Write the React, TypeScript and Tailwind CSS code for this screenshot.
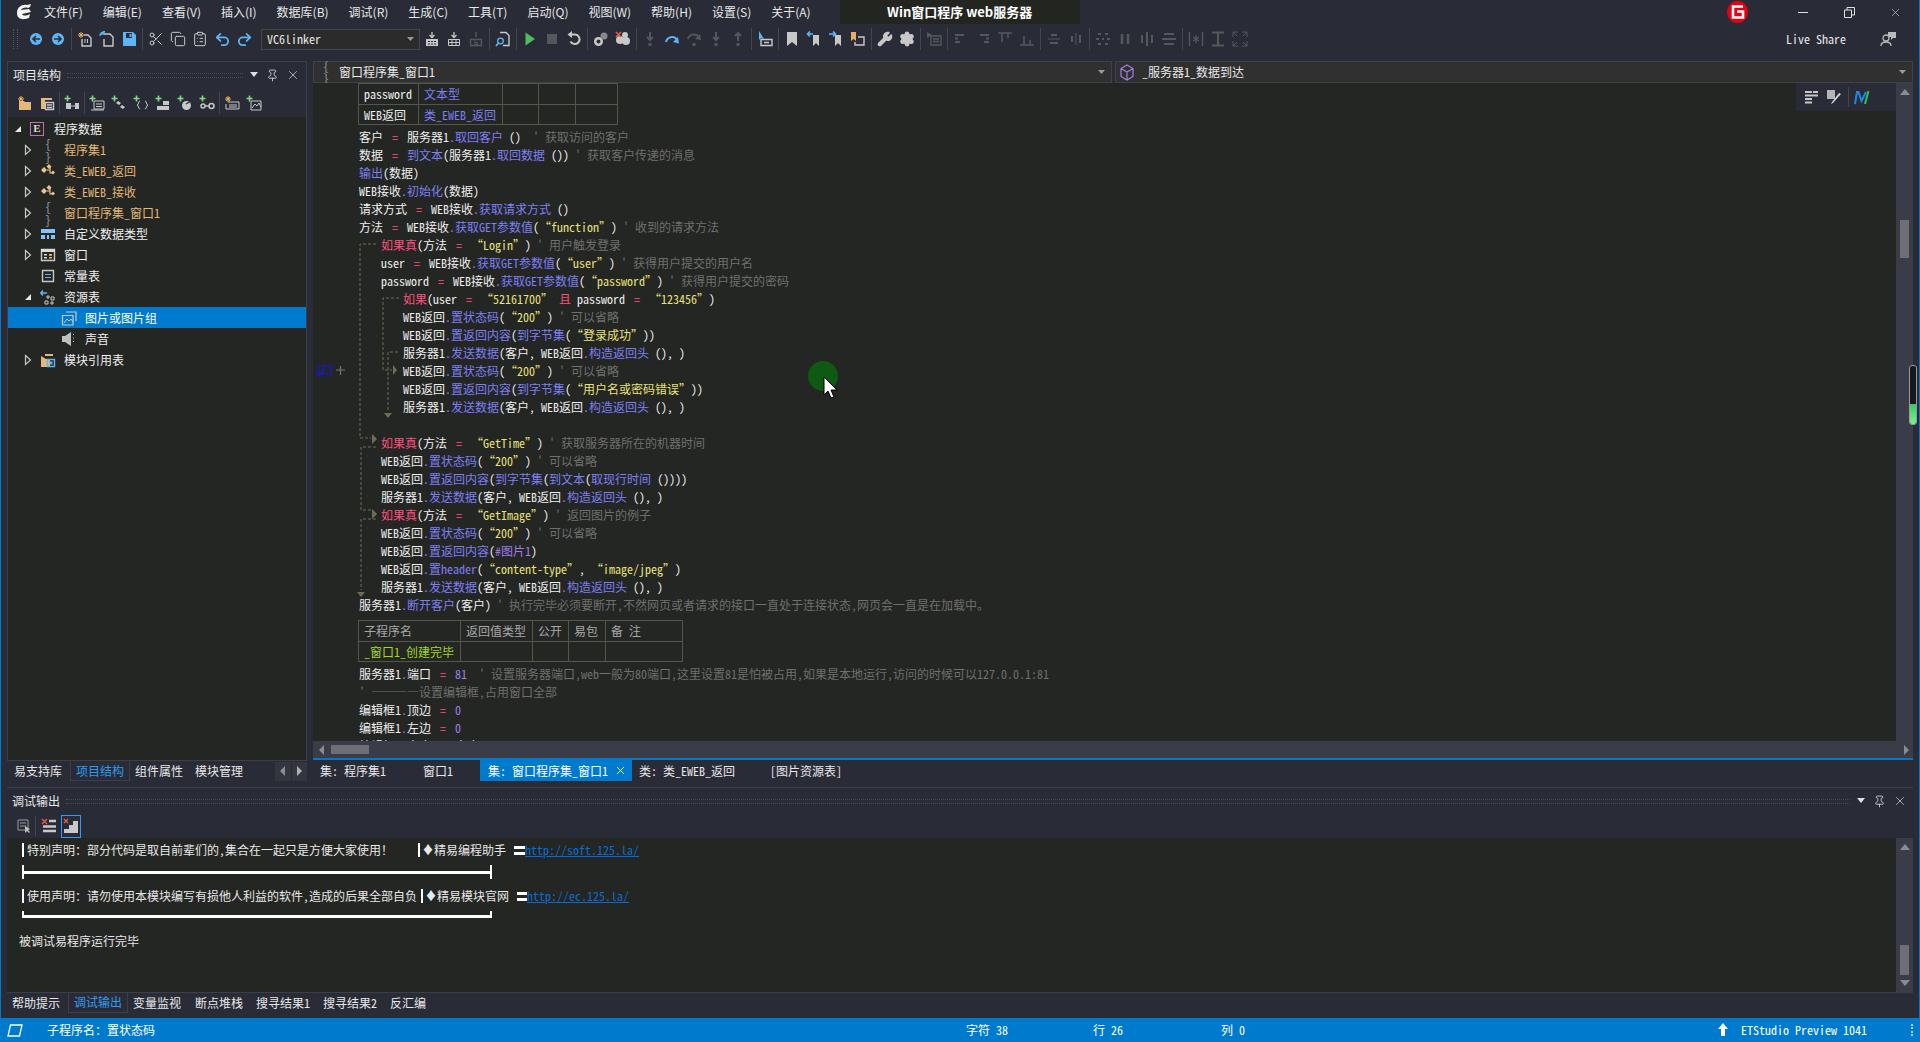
import type { ReactNode } from "react";
import { ClipboardList, Copy, Pin, Redo2, Scissors, Settings, Undo2, Wrench, X } from "lucide-react";

const menus = ["文件(F)", "编辑(E)", "查看(V)", "插入(I)", "数据库(B)", "调试(R)", "生成(C)", "工具(T)", "启动(Q)", "视图(W)", "帮助(H)", "设置(S)", "关于(A)"];

const blue = "#5fb4f5";
const gray = "#c8c8c8";
const dim = "#55575c";

function Svg({ children, size = 16 }: { children: ReactNode; size?: number }) {
  return (
    <svg width={size} height={size} viewBox="0 0 16 16" fill="none">
      {children}
    </svg>
  );
}

function Line({ d, c = gray, w = 1.4 }: { d: string; c?: string; w?: number }) {
  return <path d={d} stroke={c} strokeWidth={w} fill="none" />;
}

function Fill({ d, c = gray }: { d: string; c?: string }) {
  return <path d={d} fill={c} />;
}

const plus = <Line d="M3.5 0.5v6M0.5 3.5h6" c="#86d986" w={1.6} />;
const star = <Line d="M4 1v6M1 4h6M2 2l4 4M6 2l-4 4" c="#f0b45a" w={1} />;

const toolIcons: Record<string, ReactNode> = {
  back: <Svg><circle cx="8" cy="8" r="6" fill={blue} /><Line d="M12 8H6M8 5 5 8l3 3" c="#2a2d38" w={1.6} /></Svg>,
  forward: <Svg><circle cx="8" cy="8" r="6" fill={blue} /><Line d="M4 8h6M8 5l3 3-3 3" c="#2a2d38" w={1.6} /></Svg>,
  newFile: <Svg>{star}<Line d="M7 4h4l3 3v8H5V8" /><Line d="M8 8v4M10.500 8v4" w={1} /></Svg>,
  open: <Svg><Line d="M5 3h6l3 3v9H5V8" /><Line d="M1 5c0-3 2-4 5-4M5 0v3H2" c={blue} /></Svg>,
  save: <Svg><Fill d="M2 1h10l3 3v11H2z" c={blue} /><Fill d="M5 2h6v5H5z" c="#2a2d38" /><Fill d="M8.500 3h2v3h-2z" c={blue} /></Svg>,
  build: <Svg><Line d="M8 1v5M5.500 4 8 6.500 10.500 4" w={1.3} /><Fill d="M2 8h12v7H2z" /><Fill d="M4 10h2v1H4zM7 10h2v1H7zM10 10h2v1h-2zM4 12.500h2v1H4zM7 12.500h2v1H7zM10 12.500h2v1h-2z" c="#2a2d38" /></Svg>,
  buildAll: <Svg><Line d="M8 1v5M5.500 4 8 6.500 10.500 4" w={1.3} /><Line d="M2.500 8.500h11v6h-11zM2.500 11.500h11M6 8.500v6M10 8.500v6" w={1} /></Svg>,
  buildOff: <Svg><Line d="M8 1v5" c={dim} /><Line d="M2.500 8.500h11v6h-11z" c={dim} /><Line d="M7 10v3.500h2.500v-2H7" c={dim} w={1} /></Svg>,
  docFind: <Svg><Line d="M5 1.500h6l3 3v10H8" /><circle cx="5.500" cy="10" r="2.800" stroke={blue} strokeWidth="1.300" /><Line d="M3.500 12 1 15" c={blue} w={1.6} /></Svg>,
  play: <Svg><Fill d="M3.500 1.500 13 8l-9.500 6.500z" c="#4dbd5f" /></Svg>,
  stop: <Svg><Fill d="M3 3h10v10H3z" c={dim} /></Svg>,
  restart: <Svg><Line d="M4 3.500h5a4.800 4.800 0 1 1-4.500 7" w={2} /><Fill d="M6 0v7L1.500 3.500z" /></Svg>,
  breakOn: <Svg><circle cx="5.500" cy="10.500" r="4.500" fill={gray} /><circle cx="5.500" cy="10.500" r="2" fill="#2a2d38" /><circle cx="11" cy="5" r="3.500" fill="#888" /></Svg>,
  breakOff: <Svg><circle cx="5" cy="9" r="4" fill={gray} /><circle cx="11" cy="10" r="4" fill={gray} /><circle cx="10" cy="4" r="3" fill={gray} /><Line d="M1 1l5 5M6 1 1 6" c="#e45a4d" w={1.6} /></Svg>,
  stepDim: <Svg><Line d="M8 1v8M5 6l3 3 3-3" c={dim} w={2} /><circle cx="8" cy="13.500" r="1.800" fill={dim} /></Svg>,
  stepUpDim: <Svg><Line d="M8 10V2M5 5l3-3 3 3" c={dim} w={2} /><circle cx="8" cy="13.500" r="1.800" fill={dim} /></Svg>,
  over: <Svg><Line d="M2 11c1-5 8-7 11-2" c={blue} w={2} /><Fill d="M15 12.500 9 11l5-5z" c={blue} /></Svg>,
  overDim: <Svg><Line d="M2 8c1-5 8-6 11-2" c={dim} w={2} /><Fill d="M15 9 9 8l5-5z" c={dim} /><circle cx="8" cy="13.500" r="1.800" fill={dim} /></Svg>,
  cursor: <Svg><Fill d="M2 0v9l2-2 3 1z" c={blue} /><Line d="M4 8.500h11v6H4zM7 11.500h5" /></Svg>,
  mark: <Svg><Fill d="M3 1h10v14l-5-4-5 4z" /></Svg>,
  markPrev: <Svg><Fill d="M7 4h6v11l-3-3-3 3z" /><Line d="M7 3H2M4 .500 1.500 3 4 5.500" c={blue} w={1.6} /></Svg>,
  markNext: <Svg><Fill d="M7 4h6v11l-3-3-3 3z" /><Line d="M1 3h6M5 .500 7.500 3 5 5.500" c={blue} w={1.6} /></Svg>,
  markClear: <Svg><Fill d="M1 1h5v9L3.500 8 1 10z" c="#e3b061" /><Line d="M8 6h6v8H5v-3" /></Svg>,
  wrench: <Wrench size={16} color={gray} fill={gray} />,
  gear: <Settings size={16} color={gray} fill={gray} strokeWidth={2.5} />,
  listDim: <Svg><Fill d="M1 1l5 3-5 3z" c={dim} /><Line d="M5 5h10v9H5zM7 8h6M7 10.500h6" c={dim} /></Svg>,
  alignL: <Svg><Line d="M2 4h9M2 11h5M2 7.500h3" c={dim} w={2} /></Svg>,
  alignR: <Svg><Line d="M5 4h9M9 11h5M11 7.500h3" c={dim} w={2} /></Svg>,
  alignT: <Svg><Line d="M1 2h14M5 2v9M11 2v5" c={dim} w={1.6} /></Svg>,
  alignB: <Svg><Line d="M1 14h14M5 14V5M11 14V9" c={dim} w={1.6} /></Svg>,
  midV: <Svg><Line d="M2 8h12" c={dim} w={1} /><Line d="M5 4h6M4 12h8" c={dim} w={2} /></Svg>,
  midH: <Svg><Line d="M8 2v12" c={dim} w={1} /><Line d="M4 5v6M12 4v8" c={dim} w={2} /></Svg>,
  spaceV: <Svg><Line d="M3 3h3M10 3h3M1 8h3M7 8h2M12 8h3M3 13h3M10 13h3" c={dim} w={2} /></Svg>,
  spaceH: <Svg><Line d="M5 3v10M11 3v10" c={dim} w={2.6} /></Svg>,
  spaceH2: <Svg><Line d="M3 4v8M8 1v14M13 4v8" c={dim} w={2} /></Svg>,
  spaceV2: <Svg><Line d="M3 3h10M1 8h14M3 13h10" c={dim} w={2} /></Svg>,
  sizeH: <Svg><Line d="M1.500 1v14M14.500 1v14M8 4v8M5 6l6 4M11 6l-6 4" c={dim} w={1.3} /></Svg>,
  sizeV: <Svg><Line d="M2 1.500h12M2 14.500h12M8 2v12" c={dim} w={2} /></Svg>,
  fit: <Svg><Line d="M1 6V1h5M1 1l4 4M15 6V1h-5M15 1l-4 4M1 10v5h5M1 15l4-4M15 10v5h-5M15 15l-4-4" c={dim} w={1} /></Svg>,
};

const leftGroup = ["back", "forward", "|", "newFile", "open", "save", "|", "cut", "copy", "paste", "undo", "redo"];
const midGroup = ["build", "buildAll", "buildOff", "|", "docFind", "|", "play", "stop", "restart", "|", "breakOn", "breakOff", "|", "stepDim", "over", "overDim", "stepDim", "stepUpDim", "|", "cursor", "|", "mark", "markPrev", "markNext", "markClear", "|", "wrench", "gear", "|", "listDim", "|", "alignL", "alignR", "alignT", "alignB", "|", "midV", "midH", "|", "spaceV", "spaceH", "spaceH2", "spaceV2", "|", "sizeH", "sizeV", "fit"];

function ToolIcon({ name }: { name: string }) {
  if (name === "|") return <div className="mx-[2px] h-[22px] w-px bg-[#43464f]" />;
  let icon = toolIcons[name];
  if (name === "cut") icon = <Scissors size={16} color={gray} strokeWidth={1.5} />;
  if (name === "copy") icon = <Copy size={16} color={gray} strokeWidth={1.5} />;
  if (name === "paste") icon = <ClipboardList size={16} color={gray} strokeWidth={1.5} />;
  if (name === "undo") icon = <Undo2 size={17} color={blue} strokeWidth={2.5} />;
  if (name === "redo") icon = <Redo2 size={17} color={blue} strokeWidth={2.5} />;
  return <div className="flex h-[22px] w-[22px] items-center justify-center">{icon}</div>;
}

const panelIcons: ReactNode[] = [
  <Svg key="a"><Fill d="M2 6h5l1 1h6v8H2z" c="#e3b878" />{star}</Svg>,
  <Svg key="b"><Fill d="M2 3h11v2H2z" c="#e3b878" /><Fill d="M2 5h4v9H2z" c="#e3b878" /><Line d="M6.500 7.500h8v7h-8zM8 10h5M8 12.500h5" /></Svg>,
  null,
  <Svg key="c">{plus}<Fill d="M2 8h5v6H2zM11 8h4v6h-4z" /><Line d="M7 11h4" w={1} /></Svg>,
  null,
  <Svg key="d">{plus}<Line d="M5 6h10v8H5zM7 9h6M7 11.500h6M2 15h13" w={1} /></Svg>,
  <Svg key="e">{plus}<Fill d="M7 6l3 2-2 2-3-2zM11 10l3 2-2 2-3-2z" /></Svg>,
  <Svg key="f">{plus}<Line d="M7 6c-2 0-1 4-3 4 2 0 1 4 3 4M12 6c2 0 1 4 3 4-2 0-1 4-3 4" w={1} /></Svg>,
  <Svg key="g">{plus}<Fill d="M8 6h6v4H8zM2 11h12v4H2z" /></Svg>,
  <Svg key="h">{plus}<circle cx="9.500" cy="10.500" r="4.500" fill={gray} /><Line d="M9 9l5-3" c="#2a2d38" /></Svg>,
  <Svg key="i">{plus}<circle cx="4" cy="11" r="2" stroke={gray} strokeWidth="1.500" /><circle cx="12.500" cy="11" r="2.500" stroke={gray} strokeWidth="1.500" /><Line d="M6 11h4" /></Svg>,
  null,
  <Svg key="j">{star}<Line d="M4 7h11v7H2V9M5 10h8M5 12h8" w={1} /></Svg>,
  <Svg key="k">{plus}<Line d="M5 6h10v9H5z" w={1} /><Line d="M6 13l3-4 2 2 2-3 2 4" w={1} /></Svg>,
];

const braces = <span className="w-[16px] text-center text-[13px] leading-none text-[#8d96a0]">{"{ }"}</span>;
const classIcon = <Svg><Fill d="M1 7l3-3 3 3-3 3zM9 1l2.500 2.500L9 6 6.500 3.500zM11 9.500l2-2 2 2-2 2z" c="#e8c48e" /><Line d="M7 7h3V4M10 7v3h2" c="#e8c48e" w={1.2} /></Svg>;

const treeRows: { indent: number; tri?: "open" | "closed"; icon?: ReactNode; text: string; color?: string; on?: boolean }[] = [
  { indent: 0, tri: "open", icon: <span className="flex h-[14px] w-[14px] items-center justify-center border border-[#b972b9] font-['Liberation_Serif',serif] text-[11px] font-bold leading-none text-[#ddd]">E</span>, text: "程序数据" },
  { indent: 1, tri: "closed", icon: braces, text: "程序集1", color: "text-[#e3b878]" },
  { indent: 1, tri: "closed", icon: classIcon, text: "类_EWEB_返回", color: "text-[#e3b878]" },
  { indent: 1, tri: "closed", icon: classIcon, text: "类_EWEB_接收", color: "text-[#e3b878]" },
  { indent: 1, tri: "closed", icon: braces, text: "窗口程序集_窗口1", color: "text-[#e3b878]" },
  { indent: 1, tri: "closed", icon: <Svg><Fill d="M1 3h14v4H1zM1 9h4v4H1zM7 9h2v4H7zM11 9h4v4h-4z" c="#7fc3ff" /></Svg>, text: "自定义数据类型" },
  { indent: 1, tri: "closed", icon: <Svg><Line d="M1.500 2.500h13v11h-13z" /><Fill d="M1 2h14v3H1zM4 7h3v1.500H4zM9 7h3v1.500H9zM4 10h3v1.500H4z" c="#d8d8d8" /><Fill d="M9 10h3v1.500H9zM9 7h3v1.500H9z" c="#e8b86a" /></Svg>, text: "窗口" },
  { indent: 1, icon: <Svg><Line d="M2.500 2.500h11v11h-11z" /><Line d="M5 6.500h6M5 9.500h6" c={blue} w={1.2} /></Svg>, text: "常量表" },
  { indent: 1, tri: "open", icon: <Svg><Line d="M1 4h6M3 1.500 .800 4 3 6.500" c={blue} /><Line d="M7 7h2v2H7zM11 8h3v3h-3zM5 12h3v3H5zM11 13h2v2h-2z" w={1} /></Svg>, text: "资源表" },
  { indent: 2, icon: <Svg><Line d="M5 2h10v9" w={1.2} /><Line d="M1.500 5.500h10.500v9.500H1.500z" w={1.2} /><Line d="M3 13l3-4 2 2 2-2 2 3" w={1} /></Svg>, text: "图片或图片组", on: true },
  { indent: 2, icon: <Svg><Fill d="M1 5h3l6-4v14l-6-4H1z" c="#c0c0c0" /><Line d="M12 7h1M12 10l1 1M12 4l1-1" w={1} /></Svg>, text: "声音" },
  { indent: 1, tri: "closed", icon: <Svg><Fill d="M1 4h4v-2h8v2H1v11h9V7h-4" c="#e3b878" /><Line d="M7.500 7.500h7v7h-7z" c={blue} /><Fill d="M9.500 9.500h3v3h-3z" c={blue} /></Svg>, text: "模块引用表" },
];

function TreeRow({ row }: { row: (typeof treeRows)[number] }) {
  const left = row.indent === 0 ? "pl-[6px]" : row.indent === 1 ? "pl-[16px]" : "pl-[37px]";
  return (
    <div className={`flex h-[21px] items-center ${left} ${row.on ? "bg-[#007acc] text-white" : "text-[#f0f0f0]"}`}>
      <div className="flex w-[16px] shrink-0 items-center">
        {row.tri === "open" && (
          <svg width="8" height="8" viewBox="0 0 8 8"><path d="M7 1v6H1z" fill="#e8e8e8" /></svg>
        )}
        {row.tri === "closed" && (
          <svg width="8" height="12" viewBox="0 0 8 12"><path d="M1.500 1.500 6.500 6l-5 4.500z" stroke="#c8c8c8" strokeWidth="1.200" fill="none" /></svg>
        )}
      </div>
      <div className="flex w-[22px] shrink-0 items-center">{row.icon}</div>
      <span className={`ml-[2px] ${row.color ?? ""}`}>{row.text}</span>
    </div>
  );
}

// small markup for the code lines: each part starts with a colour key
const tokenClass: Record<string, string> = {
  w: "text-[#efefef]",
  b: "text-[#7f7ff5]",
  p: "text-[#ff4f80]",
  y: "text-[#e9e27a]",
  c: "text-[#6f6f6f]",
  n: "text-[#a07de8]",
};

const indent0 = "";
const indent1 = "pl-[22px]";
const indent2 = "pl-[44px]";

const codeTop: [string, string][] = [
  [indent0, "w客户|=|w服务器1|b.取回客户|w ()|c  ' 获取访问的客户"],
  [indent0, "w数据|=|b到文本|w（服务器1|b.取回数据|w ()）|c ' 获取客户传递的消息"],
  [indent0, "b输出|w（数据）"],
  [indent0, "wWEB接收|b.初始化|w（数据）"],
  [indent0, "w请求方式|=|wWEB接收|b.获取请求方式|w ()"],
  [indent0, "w方法|=|wWEB接收|b.获取GET参数值|w（|y“function”|w）|c ' 收到的请求方法"],
  [indent1, "p如果真|w（方法|=|y“Login”|w）|c ' 用户触发登录"],
  [indent1, "wuser|=|wWEB接收|b.获取GET参数值|w（|y“user”|w）|c ' 获得用户提交的用户名"],
  [indent1, "wpassword|=|wWEB接收|b.获取GET参数值|w（|y“password”|w）|c ' 获得用户提交的密码"],
  [indent2, "p如果|w（user|=|y“52161700”|w |p且|w password|=|y“123456”|w）"],
  [indent2, "wWEB返回|b.置状态码|w（|y“200”|w）|c ' 可以省略"],
  [indent2, "wWEB返回|b.置返回内容|w（|b到字节集|w（|y“登录成功”|w））"],
  [indent2, "w服务器1|b.发送数据|w（客户, WEB返回|b.构造返回头|w (), ）"],
  [indent2, "wWEB返回|b.置状态码|w（|y“200”|w）|c ' 可以省略"],
  [indent2, "wWEB返回|b.置返回内容|w（|b到字节集|w（|y“用户名或密码错误”|w））"],
  [indent2, "w服务器1|b.发送数据|w（客户, WEB返回|b.构造返回头|w (), ）"],
  [indent2, "w "],
  [indent1, "p如果真|w（方法|=|y“GetTime”|w）|c ' 获取服务器所在的机器时间"],
  [indent1, "wWEB返回|b.置状态码|w（|y“200”|w）|c ' 可以省略"],
  [indent1, "wWEB返回|b.置返回内容|w（|b到字节集|w（|b到文本|w（|b取现行时间|w ()）））"],
  [indent1, "w服务器1|b.发送数据|w（客户, WEB返回|b.构造返回头|w (), ）"],
  [indent1, "p如果真|w（方法|=|y“GetImage”|w）|c ' 返回图片的例子"],
  [indent1, "wWEB返回|b.置状态码|w（|y“200”|w）|c ' 可以省略"],
  [indent1, "wWEB返回|b.置返回内容|w（|n#图片1|w）"],
  [indent1, "wWEB返回|b.置header|w（|y“content-type”|w, |y“image/jpeg”|w）"],
  [indent1, "w服务器1|b.发送数据|w（客户, WEB返回|b.构造返回头|w (), ）"],
  [indent0, "w服务器1|b.断开客户|w（客户）|c ' 执行完毕必须要断开，不然网页或者请求的接口一直处于连接状态，网页会一直是在加载中。"],
];

const codeBottom: [string, string][] = [
  [indent0, "w服务器1|b.|w端口|=|n81|c  ' 设置服务器端口,web一般为80端口，这里设置81是怕被占用，如果是本地运行，访问的时候可以127.0.0.1:81"],
  [indent0, "c' ————设置编辑框，占用窗口全部"],
  [indent0, "w编辑框1|b.|w顶边|=|n0"],
  [indent0, "w编辑框1|b.|w左边|=|n0"],
  [indent0, "w编辑框1|b.|w宽度|=|w宽度"],
];

function CodeLine({ line }: { line: [string, string] }) {
  return (
    <div className={`h-[18px] whitespace-pre leading-[18px] ${line[0]}`}>
      {line[1].split("|").map((part, i) =>
        part === "=" ? (
          <span key={i} className="inline-block w-[24px] text-center text-[#ff4f80]">=</span>
        ) : (
          <span key={i} className={tokenClass[part[0]]}>{part.slice(1)}</span>
        ),
      )}
    </div>
  );
}

function GripBand() {
  return <div className="h-[5px] min-w-0 flex-1 border-y border-dotted border-[#4a4c54]" />;
}

function PanelControls() {
  return (
    <div className="flex items-center gap-[7px] text-[#e0e0e0]">
      <svg width="10" height="6" viewBox="0 0 10 6"><path d="M1 0h8L5 5z" fill="#e0e0e0" /></svg>
      <Pin size={13} strokeWidth={1.5} />
      <X size={14} strokeWidth={1.2} />
    </div>
  );
}

function CellTable({ widths, rows }: { widths: string[]; rows: ReactNode[][] }) {
  return (
    <table className="table-fixed border-collapse">
      <colgroup>
        {widths.map((w) => (
          <col key={w} className={w} />
        ))}
      </colgroup>
      <tbody>
        {rows.map((row, r) => (
          <tr key={r} className={r === 0 ? "h-[21px]" : "h-[20px]"}>
            {row.map((cell, c) => (
              <td key={c} className="border border-[#55564a] px-[5px] py-0 leading-none">{cell}</td>
            ))}
          </tr>
        ))}
      </tbody>
    </table>
  );
}

function VScrollArrow({ up }: { up?: boolean }) {
  return (
    <svg width="10" height="7" viewBox="0 0 10 7">
      <path d={up ? "M5 0l5 6H0z" : "M5 6 0 0h10z"} fill="#8a8c92" />
    </svg>
  );
}

export default function App() {
  return (
    <div lang="zh-CN" className="flex h-[1042px] w-[1920px] flex-col overflow-hidden border-x border-[#007acc] bg-[#292c37] font-['Noto_Sans_CJK_SC',sans-serif] text-[12px] text-[#e8e8e8] [font-feature-settings:'hwid']">
      {/* title + menu */}
      <div className="flex h-[24px] shrink-0 items-center">
        <svg className="ml-[14px]" width="18" height="18" viewBox="0 0 18 18">
          <path d="M2 10c0-6 5-9 10-8l4-1-1 3-2 1c-3-1-6 0-7 2l8-1 2 3-9 2c1 2 4 2 8 0l-1 4c-5 2-12 2-12-5z" fill="#f4f4f4" />
        </svg>
        <div className="ml-[11px] flex gap-[20px] [font-feature-settings:normal]">
          {menus.map((m) => (
            <span key={m} className="leading-none">{m}</span>
          ))}
        </div>
        <div className="ml-[29px] flex h-[24px] w-[240px] items-center justify-center bg-[#232521] text-[13px] font-bold text-white [font-feature-settings:normal]">Win窗口程序 web服务器</div>
        <div className="ml-auto flex items-center">
          <svg width="21" height="22" viewBox="0 0 21 22">
            <ellipse cx="10.500" cy="11" rx="10.500" ry="11" fill="#e60012" />
            <path d="M16 5.500H6v11h10v-6h-6" stroke="#fff" strokeWidth="2.600" fill="none" />
          </svg>
          <div className="ml-[50px] h-px w-[10px] bg-[#e0e0e0]" />
          <svg className="ml-[36px]" width="11" height="11" viewBox="0 0 11 11">
            <path d="M.500 3h7v7.500h-7zM3 3V.500h7.500V8H8" stroke="#e0e0e0" fill="none" />
          </svg>
          <X className="mx-[17px] ml-[34px]" size={13} strokeWidth={1} />
        </div>
      </div>

      {/* toolbar */}
      <div className="flex h-[37px] shrink-0 items-center pb-[7px]">
        <div className="ml-[12px] mr-[7px] h-[20px] w-[5px] border-x border-dotted border-[#55575c]" />
        {leftGroup.map((name, i) => (
          <ToolIcon key={i} name={name} />
        ))}
        <div className="ml-[6px] mr-[1px] flex h-[21px] w-[159px] items-center justify-between border border-[#43464f] bg-[#2b2b2b] px-[5px] text-[12px]">
          VC6linker
          <svg width="7" height="4" viewBox="0 0 7 4"><path d="M0 0h7L3.500 4z" fill="#999" /></svg>
        </div>
        {midGroup.map((name, i) => (
          <ToolIcon key={i} name={name} />
        ))}
        <span className="ml-auto">Live Share</span>
        <svg className="ml-[34px] mr-[22px]" width="17" height="17" viewBox="0 0 17 17">
          <circle cx="6" cy="7" r="3" stroke="#bbb" fill="none" strokeWidth="1.300" />
          <path d="M1 15c0-3 2-4 5-4s5 1 5 4" stroke="#bbb" fill="none" strokeWidth="1.300" />
          <path d="M8 1h8v6h-3l-2 2V6H8z" fill="#bbb" />
        </svg>
      </div>

      {/* dock: project panel + editor */}
      <div className="flex h-[720px] shrink-0 px-[6px]">
        <div className="flex w-[300px] shrink-0 flex-col">
          <div className="flex min-h-0 flex-1 flex-col border border-[#3c3f48]">
            <div className="flex h-[26px] shrink-0 items-center gap-[6px] pl-[5px] pr-[6px]">
              <span>项目结构</span>
              <GripBand />
              <PanelControls />
            </div>
            <div className="flex h-[29px] shrink-0 items-center pl-[6px]">
              {panelIcons.map((icon, i) =>
                icon ? (
                  <div key={i} className="flex w-[22px] justify-center">{icon}</div>
                ) : (
                  <div key={i} className="mx-[1px] h-[22px] w-px bg-[#43464f]" />
                ),
              )}
            </div>
            <div className="min-h-0 flex-1 bg-[#242623] pt-[1px]">
              {treeRows.map((row) => (
                <TreeRow key={row.text} row={row} />
              ))}
            </div>
          </div>
          <div className="flex h-[20px] shrink-0 items-center">
            <span className="ml-[7px]">易支持库</span>
            <span className="ml-[8px] flex h-[20px] w-[60px] items-center justify-center border-x border-b border-[#3c3f48] text-[#2f9bf0]">项目结构</span>
            <span className="ml-[5px]">组件属性</span>
            <span className="ml-[12px]">模块管理</span>
            <div className="ml-auto flex h-[19px] w-[32px] bg-[#33363f]">
              <div className="flex flex-1 items-center justify-center">
                <svg width="6" height="10" viewBox="0 0 6 10"><path d="M5 0v10L0 5z" fill="#8a8c92" /></svg>
              </div>
              <div className="flex flex-1 items-center justify-center border-l border-[#292c37]">
                <svg width="6" height="10" viewBox="0 0 6 10"><path d="M1 0v10l5-5z" fill="#b0b0b0" /></svg>
              </div>
            </div>
          </div>
        </div>

        <div className="ml-[6px] flex min-w-0 flex-1 flex-col">
          <div className="flex h-[22px] shrink-0 gap-[3px]">
            <div className="flex w-[799px] items-center border border-[#3f4147] bg-[#303030] pl-[5px] pr-[6px]">
              <span className="w-[14px] text-center text-[12px] leading-none text-[#9aa0a6]">{"{ }"}</span>
              <span className="ml-[6px]">窗口程序集_窗口1</span>
              <svg className="ml-auto" width="7" height="4" viewBox="0 0 7 4"><path d="M0 0h7L3.500 4z" fill="#999" /></svg>
            </div>
            <div className="flex flex-1 items-center border border-[#3f4147] bg-[#303030] pl-[4px] pr-[6px]">
              <svg width="14" height="17" viewBox="0 0 14 17"><path d="M7 1l6 3.500v8L7 16l-6-3.500v-8zM1 4.500 7 8l6-3.500M7 8v8" stroke="#a17fe0" strokeWidth="1.200" fill="none" /></svg>
              <span className="ml-[8px]">_服务器1_数据到达</span>
              <svg className="ml-auto" width="7" height="4" viewBox="0 0 7 4"><path d="M0 0h7L3.500 4z" fill="#999" /></svg>
            </div>
          </div>

          <div className="flex min-h-0 flex-1">
            <div className="relative min-w-0 flex-1 overflow-hidden bg-[#242623] pl-[45px]">
              <CellTable
                widths={["w-[60px]", "w-[84px]", "w-[36px]", "w-[37px]", "w-[42px]"]}
                rows={[
                  [<span key="a" className="text-[#efefef]">password</span>, <span key="b" className="text-[#7f7ff5]">文本型</span>, null, null, null],
                  [<span key="a" className="text-[#efefef]">WEB返回</span>, <span key="b" className="text-[#7f7ff5]">类_EWEB_返回</span>, null, null, null],
                ]}
              />
              <div className="mt-[3px] pl-[1px]">
                {codeTop.map((line, i) => (
                  <CodeLine key={i} line={line} />
                ))}
              </div>
              <div className="mb-[3px] mt-[6px]">
                <CellTable
                  widths={["w-[102px]", "w-[72px]", "w-[36px]", "w-[37px]", "w-[77px]"]}
                  rows={[
                    ["子程序名", "返回值类型", "公开", "易包", "备 注"].map((t) => <span key={t} className="text-[#a8a8a8]">{t}</span>),
                    [<span key="a" className="text-[#a3d81e]">_窗口1_创建完毕</span>, null, null, null, null],
                  ]}
                />
              </div>
              <div className="pl-[1px]">
                {codeBottom.map((line, i) => (
                  <CodeLine key={i} line={line} />
                ))}
              </div>

              {/* flow lines of the if-blocks */}
              <svg className="absolute left-0 top-0" width="200" height="658" viewBox="313 83 200 658">
                <g stroke="#6d6f54" strokeDasharray="3 2" fill="none">
                  <path d="M376 244H360V438H371" />
                  <path d="M376 447H361V510H371" />
                  <path d="M376 519H361V590" />
                  <path d="M399 298H383V370H392" />
                  <path d="M398 352H388V412" />
                </g>
                <g fill="#6d6f54">
                  <path d="M372 434l5 5-5 5z" />
                  <path d="M372 509l5 5-5 5z" />
                  <path d="M357 592h8l-4 5z" />
                  <path d="M393 365l4 5-4 5z" />
                  <path d="M384 413h8l-4 5z" />
                </g>
                <path d="M319 364v11M316 372l3 4 3-4M323 366h8v8h-8z" stroke="#1a1ab8" strokeWidth="1.500" fill="none" />
                <path d="M336 370h9M340.500 366v9" stroke="#77776a" strokeWidth="1.200" />
              </svg>

              {/* pointer with click highlight */}
              <svg className="absolute left-[495px] top-[278px]" width="32" height="40" viewBox="0 0 32 40">
                <circle cx="15" cy="15" r="15" fill="#0f5a12" />
                <path d="M16 16v18l4-4 3 7 3-1-3-7h6z" fill="#fff" stroke="#000" />
              </svg>

              <div className="absolute right-0 top-0 flex h-[28px] w-[100px] items-center bg-[#292c37]">
                <svg className="ml-[9px]" width="14" height="13" viewBox="0 0 14 13"><path d="M0 1h7M8 1h5M0 4.500h11M0 8h7M0 11.500h7M8 4.500h5" stroke="#c8c8c8" strokeWidth="2" /></svg>
                <svg className="ml-[8px]" width="15" height="15" viewBox="0 0 15 15"><path d="M0 0h8v9H0z" fill="#b5b5b5" /><path d="M14 4 6 13l-2 1 1-2 7-9z" fill="#d0d0d0" /></svg>
                <div className="ml-[6px] h-[20px] w-px bg-[#43464f]" />
                <svg className="ml-[5px]" width="16" height="15" viewBox="0 0 16 15"><path d="M1 14 3 2h1.500L7.500 11 12 2" stroke="#1e88e5" strokeWidth="2" fill="none" /><path d="M14.500 1 11 14" stroke="#2fbf55" strokeWidth="2" /></svg>
              </div>
            </div>
            <div className="relative flex w-[17px] shrink-0 flex-col items-center bg-[#3a3d47] pt-[6px]">
              <VScrollArrow up />
              <div className="mt-[124px] h-[38px] w-[9px] bg-[#6e6e74]" />
            </div>
          </div>

          <div className="flex h-[17px] shrink-0 items-center bg-[#3a3d47] pl-[6px] pr-[4px]">
            <svg width="6" height="10" viewBox="0 0 6 10"><path d="M5 0v10L0 5z" fill="#8a8c92" /></svg>
            <div className="ml-[6px] h-[9px] w-[38px] bg-[#6e6e74]" />
            <svg className="ml-auto" width="6" height="10" viewBox="0 0 6 10"><path d="M1 0v10l5-5z" fill="#8a8c92" /></svg>
          </div>
          <div className="h-[2px] shrink-0 bg-[#007acc]" />
          <div className="flex h-[21px] shrink-0 items-center">
            <span className="ml-[7px]">集: 程序集1</span>
            <span className="ml-[37px]">窗口1</span>
            <div className="ml-[27px] flex h-full w-[152px] items-center bg-[#007acc] pl-[8px] text-white">
              <span>集: 窗口程序集_窗口1</span>
              <X className="ml-auto mr-[5px]" size={13} strokeWidth={1.6} />
            </div>
            <span className="ml-[7px]">类: 类_EWEB_返回</span>
            <span className="ml-[35px]">[图片资源表]</span>
          </div>
        </div>
      </div>

      {/* debug output */}
      <div className="mx-[6px] mt-[6px] flex h-[225px] shrink-0 flex-col border-t border-[#3c3f48]">
        <div className="flex h-[26px] shrink-0 items-center gap-[6px] pl-[5px] pr-[6px]">
          <span>调试输出</span>
          <GripBand />
          <PanelControls />
        </div>
        <div className="flex h-[24px] shrink-0 items-center pl-[6px]">
          <div className="flex w-[22px] justify-center">
            <Svg><Line d="M2 2h10v10H2zM4 5h6M4 8h6" c="#9a9a9a" w={1} /><Fill d="M9 8v7l2-2 2 2 1-1-2-2 2-1z" c="#c0c0c0" /></Svg>
          </div>
          <div className="h-[20px] w-px bg-[#43464f]" />
          <div className="ml-[2px] flex w-[22px] justify-center">
            <Svg><Line d="M1 1l5 5M6 1 1 6" c="#e45a4d" w={1.4} /><Line d="M8 3h7M2 8.500h13M2 13h13" w={2.4} /></Svg>
          </div>
          <div className="ml-[1px] flex h-[23px] w-[20px] items-center justify-center border border-[#3399ff]">
            <Svg><Line d="M1 1l4 4M5 1 1 5" c="#e45a4d" w={1.4} /><Fill d="M1 15v-4h5V7h4V3h5v12z" c="#c8c8c8" /></Svg>
          </div>
        </div>
        <div className="flex min-h-0 flex-1">
          <div className="min-w-0 flex-1 bg-[#242623] pl-[15px] pt-[5px] text-[#e8e8e8]">
            <div className="flex h-[14px] items-center">
              <span className="w-[396px] border-l-2 border-white pl-[3px] leading-[14px]">特别声明：部分代码是取自前辈们的，集合在一起只是方便大家使用！</span>
              <span className="w-[96px] border-l-2 border-white pl-[2px] leading-[14px]">♦精易编程助手</span>
              <span className="h-[9px] w-[11px] border-y-[3px] border-white" />
              <span className="ml-[0px] pl-[0px] text-[#0a6bd6] underline">http://soft.125.la/</span>
            </div>
            <div className="mt-[8px] flex h-[14px] w-[470px] items-center border-x-2 border-white">
              <div className="h-[3px] w-full bg-white" />
            </div>
            <div className="mt-[10px] flex h-[14px] items-center">
              <span className="w-[399px] border-l-2 border-white pl-[3px] leading-[14px]">使用声明：请勿使用本模块编写有损他人利益的软件,造成的后果全部自负</span>
              <span className="w-[96px] border-l-2 border-white pl-[2px] leading-[14px]">♦精易模块官网</span>
              <span className="h-[9px] w-[10px] border-y-[3px] border-white" />
              <span className="text-[#0a6bd6] underline">http://ec.125.la/</span>
            </div>
            <div className="mt-[8px] h-[7px] w-[470px] border-x-2 border-b-[3px] border-white" />
            <div className="-ml-[3px] mt-[15px] leading-[16px]">被调试易程序运行完毕</div>
          </div>
          <div className="flex w-[17px] shrink-0 flex-col items-center bg-[#3a3d47] pb-[5px] pt-[6px]">
            <VScrollArrow up />
            <div className="mb-[5px] mt-auto h-[30px] w-[9px] bg-[#6e6e74]" />
            <VScrollArrow />
          </div>
        </div>
        <div className="flex h-[20px] shrink-0 items-center border-t border-[#3c3f48]">
          <span className="ml-[5px]">帮助提示</span>
          <span className="ml-[8px] flex h-[20px] w-[60px] items-center justify-center border-x border-b border-[#3c3f48] text-[#2f9bf0]">调试输出</span>
          <span className="ml-[5px]">变量监视</span>
          <span className="ml-[14px]">断点堆栈</span>
          <span className="ml-[13px]">搜寻结果1</span>
          <span className="ml-[13px]">搜寻结果2</span>
          <span className="ml-[13px]">反汇编</span>
        </div>
      </div>

      {/* status bar */}
      <div className="mt-[6px] flex h-[24px] shrink-0 items-center bg-[#007acc] text-white">
        <svg className="ml-[6px]" width="16" height="13" viewBox="0 0 16 13"><path d="M3.500 1H15l-2.500 11H1z" stroke="#fff" fill="none" strokeWidth="1.300" /></svg>
        <span className="ml-[24px] w-[919px]">子程序名：置状态码</span>
        <span className="w-[127px]">字符 38</span>
        <span className="w-[128px]">行 26</span>
        <span className="w-[497px]">列 0</span>
        <svg width="10" height="14" viewBox="0 0 10 14"><path d="M5 0l5 6H7v7H3V6H0z" fill="#fff" /></svg>
        <span className="ml-[13px]">ETStudio Preview 1041</span>
        <div className="ml-auto mr-[6px] h-[12px] w-[8px] border-r-2 border-dotted border-[#9fd0ef]" />
      </div>

      {/* memory meter on the right edge */}
      <div className="absolute left-[1909px] top-[365px] flex h-[60px] w-[8px] flex-col justify-end overflow-hidden rounded-[3px] border border-[#9a9a9a] bg-[#16181d]">
        <div className="h-[20px] bg-[linear-gradient(#3fc45f,#7ff08f)]" />
      </div>
    </div>
  );
}
